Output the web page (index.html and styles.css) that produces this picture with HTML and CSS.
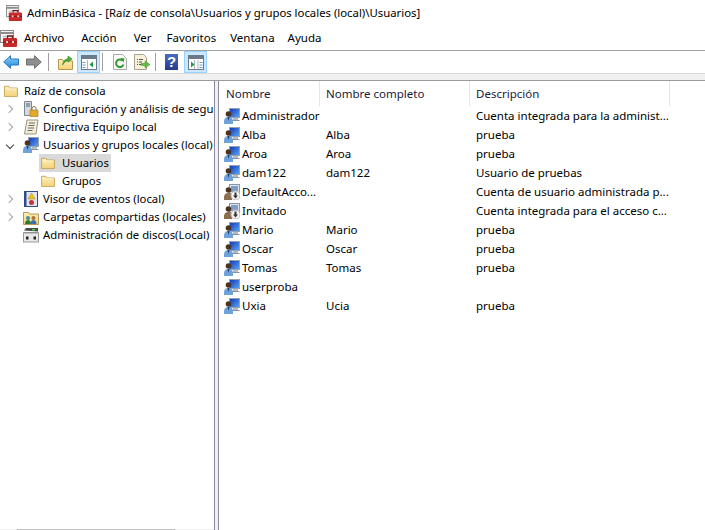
FILE: index.html
```html
<!DOCTYPE html>
<html lang="es">
<head>
  <meta charset="UTF-8">
  <title>AdminBásica</title>
  <link rel="stylesheet" href="styles.css">
</head>
<body>

  <!-- shared icons -->
  <svg class="defs" width="0" height="0">
    <defs>
      <linearGradient id="folderFill" x1="0" y1="0" x2="0" y2="1">
        <stop offset="0" stop-color="#fdeeb4"/>
        <stop offset="1" stop-color="#f4d27c"/>
      </linearGradient>
      <linearGradient id="screenFill" x1="0" y1="0" x2="1" y2="1">
        <stop offset="0" stop-color="#1237b8"/>
        <stop offset="1" stop-color="#5aa6f4"/>
      </linearGradient>
      <linearGradient id="blueArrow" x1="0" y1="0" x2="0" y2="1">
        <stop offset="0" stop-color="#8fd4fb"/>
        <stop offset="1" stop-color="#1b85d8"/>
      </linearGradient>
    </defs>
    <symbol id="folder" viewBox="0 0 16 14">
      <path d="M.5 13.500V1.500h5l1.500 2h8.500v10z" fill="url(#folderFill)" stroke="#c29f4e"/>
      <path d="M1.500 4.500h13" stroke="#fff8dc"/>
    </symbol>
    <symbol id="user" viewBox="0 0 16 16">
      <rect x="5.500" y=".5" width="10" height="9" fill="url(#screenFill)" stroke="#98a2ae"/>
      <path d="M9 10h5v2H9z" fill="#b4bac3"/>
      <path d="M7 12.500h8.500" stroke="#8a929d"/>
      <circle cx="4.500" cy="6" r="2.800" fill="#4a3320"/>
      <path d="M0 16v-3.500C.500 10 2 9 4.500 9S8.500 10 9 12.500V16z" fill="#6ea2da"/>
      <path d="M3.500 9l1 4 1-4z" fill="#1f3d6b"/>
    </symbol>
    <symbol id="userOff" viewBox="0 0 16 16">
      <rect x="5.500" y=".5" width="10" height="9" fill="#dfe5ec" stroke="#8b95a3"/>
      <rect x="7" y="2" width="7" height="6" fill="#7f9fc8"/>
      <circle cx="4.500" cy="6" r="2.800" fill="#4a3320"/>
      <path d="M0 16v-3.500C.500 10 2 9 4.500 9S8.500 10 8 12.500V16z" fill="#8a6d4c"/>
      <circle cx="11.500" cy="11.500" r="4.500" fill="#f4f4f4" stroke="#b8b8b8"/>
      <path d="M10.500 8.500h2v3h1.500l-2.500 3-2.500-3h1.500z" fill="#333"/>
    </symbol>
    <symbol id="toolbox" viewBox="0 0 17 17">
      <rect x=".5" y=".5" width="13" height="12" fill="#f4f4f4" stroke="#8d8d8d"/>
      <path d="M1 3h12" stroke="#8d8d8d" stroke-width="2"/>
      <path d="M3 6.500h3M3 9h2" stroke="#a8a8a8"/>
      <path d="M7.500 8V6h5v2" fill="none" stroke="#6e1414" stroke-width="1.400"/>
      <rect x="3" y="8" width="14" height="9" rx="1" fill="#c62a2a"/>
      <path d="M3 12h14" stroke="#7a1212"/>
      <rect x="6" y="11" width="2" height="2" fill="#e8c8c8"/>
      <rect x="12" y="11" width="2" height="2" fill="#e8c8c8"/>
    </symbol>
    <symbol id="paneBox" viewBox="0 0 16 15">
      <rect x=".5" y=".5" width="15" height="14" fill="#fff" stroke="#6b7a88"/>
      <path d="M1 2.500h14" stroke="#6b7a88" stroke-width="3"/>
      <path d="M6.500 5v9" stroke="#a9b6c2"/>
    </symbol>
  </svg>

  <header class="titlebar">
    <svg class="app-icon"><use href="#toolbox"/></svg>
    <span class="title-text">AdminBásica - [Raíz de consola\Usuarios y grupos locales (local)\Usuarios]</span>
  </header>

  <nav class="menubar">
    <svg class="menu-icon"><use href="#toolbox"/></svg>
    <span class="menu-item menu-wide">Archivo</span>
    <span class="menu-item menu-wide">Acción</span>
    <span class="menu-item">Ver</span>
    <span class="menu-item menu-tight">Favoritos</span>
    <span class="menu-item menu-narrow">Ventana</span>
    <span class="menu-item">Ayuda</span>
  </nav>

  <div class="toolbar">
    <svg class="tool tool-back" viewBox="0 0 16 14" width="16" height="14">
      <path d="M.7 7L7.500.7v3.300h8v6h-8v3.300z" fill="url(#blueArrow)" stroke="#2a76bd"/>
    </svg>
    <svg class="tool tool-forward" viewBox="0 0 16 14" width="16" height="14">
      <path d="M15.300 7L8.500.7v3.300h-8v6h8v3.300z" fill="#8f8f8f" stroke="#6f6f6f"/>
    </svg>
    <span class="tool-sep sep-first"></span>
    <svg class="tool tool-up" viewBox="0 0 15 15" width="15" height="15">
      <path d="M.5 14.500V4.500h4l1 1.500h9v8.500z" fill="url(#folderFill)" stroke="#b5974f"/>
      <path d="M4.500 10C5 6 7.500 4 10 3.500V1l4 3-4 3V5.500C8 6 6 7.500 4.500 10z" fill="#4fae32" stroke="#2f8020" stroke-width=".6"/>
    </svg>
    <span class="tool-toggle toggle-tree">
      <svg viewBox="0 0 16 15" width="16" height="15">
        <use href="#paneBox" width="16" height="15"/>
        <path d="M4.500 7.500h-3M4.500 10h-3M4.500 12.500h-3" stroke="#6a9fc0"/>
        <path d="M12 6.500v6l-3.500-3z" fill="#1e9b3a"/>
      </svg>
    </span>
    <span class="tool-sep sep-second"></span>
    <svg class="tool tool-refresh" viewBox="0 0 14 16" width="14" height="16">
      <path d="M.5.500h9l4 4v11H.500z" fill="#fbfbf6" stroke="#aaa"/>
      <path d="M10.500 10.500A3.800 3.800 0 1 1 9.500 6.500" fill="none" stroke="#2f9a34" stroke-width="2"/>
      <path d="M7.500 4l4 .5-1 4z" fill="#2f9a34"/>
    </svg>
    <svg class="tool tool-export" viewBox="0 0 16 16" width="16" height="16">
      <path d="M.5.500h9l3 3v12H.500z" fill="#f7f1dc" stroke="#a9a28c"/>
      <path d="M3 5.500h1M5 5.500h4M3 8h1M5 8h3M3 10.500h1M5 10.500h2" stroke="#555"/>
      <path d="M7 9.500h4V7l5 3.500-5 3.500v-2.500H7z" fill="#5cc03c" stroke="#3a9426" stroke-width=".5"/>
    </svg>
    <span class="tool-sep sep-third"></span>
    <span class="tool-help">?</span>
    <span class="tool-toggle toggle-actions">
      <svg viewBox="0 0 16 15" width="16" height="15">
        <use href="#paneBox" width="16" height="15"/>
        <path d="M3 6.500v6l3.500-3z" fill="#1e9b3a"/>
        <path d="M10 5v9" stroke="#a9b6c2"/>
        <path d="M11.500 7.500h3M11.500 10h3M11.500 12.500h3" stroke="#6a9fc0"/>
      </svg>
    </span>
  </div>

  <div class="band"></div>

  <main class="panes">
    <aside class="tree">
      <div class="tree-body">
        <div class="tree-row row-root">
          <svg class="ico-folder"><use href="#folder"/></svg>
          <span>Raíz de consola</span>
        </div>
        <div class="tree-row">
          <span class="chev"></span>
          <svg class="node-icon" viewBox="0 0 16 16">
            <path d="M1.500.5h7v14h-7z" fill="#d5dae0" stroke="#7d8794"/>
            <path d="M3 3h4M3 5h4" stroke="#55606e"/>
            <rect x="7" y="9" width="8" height="6.500" fill="#e3a92e" stroke="#a87512" stroke-width=".6"/>
            <path d="M9 9V7.500a2 2 0 0 1 4 0V9" fill="none" stroke="#8a7a50"/>
          </svg>
          <span class="node-label">Configuración y análisis de segu</span>
        </div>
        <div class="tree-row">
          <span class="chev"></span>
          <svg class="node-icon" viewBox="0 0 16 16">
            <path d="M4 1h11l-2 14H1.500z" fill="#f4edd6" stroke="#9b9480"/>
            <path d="M6 4h6M5.500 6.500h6M5 9h6M4.500 11.500h5" stroke="#6b6b6b"/>
          </svg>
          <span class="node-label">Directiva Equipo local</span>
        </div>
        <div class="tree-row">
          <span class="chev chev-open"></span>
          <svg class="node-icon"><use href="#user"/></svg>
          <span class="node-label">Usuarios y grupos locales (local)</span>
        </div>
        <div class="tree-row row-child is-selected">
          <svg class="ico-folder"><use href="#folder"/></svg>
          <span>Usuarios</span>
        </div>
        <div class="tree-row row-child">
          <svg class="ico-folder"><use href="#folder"/></svg>
          <span>Grupos</span>
        </div>
        <div class="tree-row">
          <span class="chev"></span>
          <svg class="node-icon" viewBox="0 0 16 16">
            <rect x="1.500" y=".5" width="13" height="15" fill="#dfe6f2" stroke="#2d4d8a"/>
            <path d="M2.500 1v14" stroke="#2d4d8a" stroke-width="2"/>
            <path d="M8.500 2l3.500 6H5z" fill="#f2c21a" stroke="#a8860f" stroke-width=".5"/>
            <circle cx="8.500" cy="11.500" r="2.500" fill="#c8323a"/>
          </svg>
          <span class="node-label">Visor de eventos (local)</span>
        </div>
        <div class="tree-row">
          <span class="chev"></span>
          <svg class="node-icon" viewBox="0 0 16 16">
            <path d="M.5 15.500V3.500h5l1 1.500h9v10.500z" fill="url(#folderFill)" stroke="#b5974f"/>
            <circle cx="5" cy="9" r="2" fill="#3f8f9c"/>
            <path d="M2 15c0-3 1.500-4 3-4s3 1 3 4z" fill="#2f7a3a"/>
            <circle cx="10.500" cy="9" r="2" fill="#a8743a"/>
            <path d="M7.500 15c0-3 1.500-4 3-4s3 1 3 4z" fill="#3a6fb0"/>
          </svg>
          <span class="node-label">Carpetas compartidas (locales)</span>
        </div>
        <div class="tree-row row-leaf">
          <svg class="node-icon" viewBox="0 0 16 16">
            <path d="M1 3.500L3 1h12v3.500z" fill="#4b4b4b"/>
            <rect x="9" y="2" width="3" height="1.500" fill="#4ed04e"/>
            <rect x=".5" y="5" width="15" height="1" fill="#8a8a8a"/>
            <rect x=".5" y="6" width="15" height="9" fill="#e9e9e9" stroke="#999"/>
            <rect x="3" y="9.500" width="2.500" height="3" fill="#222"/>
            <rect x="10.500" y="9.500" width="2.500" height="3" fill="#222"/>
          </svg>
          <span class="node-label">Administración de discos(Local)</span>
        </div>
      </div>
      <div class="tree-scroll"><span class="tree-thumb"></span></div>
    </aside>

    <div class="splitter"></div>

    <section class="list">
      <div class="list-head">
        <span class="head-cell">Nombre</span>
        <span class="head-cell">Nombre completo</span>
        <span class="head-cell">Descripción</span>
      </div>
      <div class="list-row"><span class="cell-name"><svg class="ico-user"><use href="#user"/></svg>Administrador</span><span></span><span>Cuenta integrada para la administ...</span></div>
      <div class="list-row"><span class="cell-name"><svg class="ico-user"><use href="#user"/></svg>Alba</span><span>Alba</span><span>prueba</span></div>
      <div class="list-row"><span class="cell-name"><svg class="ico-user"><use href="#user"/></svg>Aroa</span><span>Aroa</span><span>prueba</span></div>
      <div class="list-row"><span class="cell-name"><svg class="ico-user"><use href="#user"/></svg>dam122</span><span>dam122</span><span>Usuario de pruebas</span></div>
      <div class="list-row"><span class="cell-name"><svg class="ico-user"><use href="#userOff"/></svg>DefaultAcco...</span><span></span><span>Cuenta de usuario administrada p...</span></div>
      <div class="list-row"><span class="cell-name"><svg class="ico-user"><use href="#userOff"/></svg>Invitado</span><span></span><span>Cuenta integrada para el acceso c...</span></div>
      <div class="list-row"><span class="cell-name"><svg class="ico-user"><use href="#user"/></svg>Mario</span><span>Mario</span><span>prueba</span></div>
      <div class="list-row"><span class="cell-name"><svg class="ico-user"><use href="#user"/></svg>Oscar</span><span>Oscar</span><span>prueba</span></div>
      <div class="list-row"><span class="cell-name"><svg class="ico-user"><use href="#user"/></svg>Tomas</span><span>Tomas</span><span>prueba</span></div>
      <div class="list-row"><span class="cell-name"><svg class="ico-user"><use href="#user"/></svg>userproba</span><span></span><span></span></div>
      <div class="list-row"><span class="cell-name"><svg class="ico-user"><use href="#user"/></svg>Uxia</span><span>Ucia</span><span>prueba</span></div>
    </section>
  </main>

</body>
</html>
```

FILE: styles.css
```css
* {
  box-sizing: border-box;
}

html, body {
  height: 100%;
}

body {
  margin: 0;
  display: flex;
  flex-direction: column;
  overflow: hidden;
  background: #fff;
  color: #000;
  font-family: "Noto Sans", "Open Sans", sans-serif;
  font-size: 11.5px;
  line-height: 16px;
}

.defs {
  display: block;
  flex: none;
}

/* Title + menu */
.titlebar {
  flex: none;
  height: 26px;
  display: flex;
  align-items: center;
  padding-left: 6px;
  gap: 5px;
}

.app-icon {
  width: 16px;
  height: 16px;
  flex: none;
}

.title-text {
  font-size: 11.35px;
  white-space: nowrap;
}

.menubar {
  flex: none;
  height: 25px;
  display: flex;
  align-items: center;
  border-bottom: 1px solid #a0a0a0;
}

.menu-icon {
  width: 17px;
  height: 17px;
  flex: none;
  margin-right: 7px;
}

.menu-item {
  margin-right: 15px;
}

.menu-wide {
  margin-right: 17px;
}

.menu-tight {
  margin-right: 14px;
}

.menu-narrow {
  margin-right: 13px;
}

/* Toolbar */
.toolbar {
  flex: none;
  height: 23px;
  display: flex;
  align-items: center;
  padding-left: 3px;
  border-bottom: 1px solid #d9d9d9;
}

.tool {
  flex: none;
}

.tool-forward {
  margin-left: 7px;
}

.tool-sep {
  flex: none;
  width: 1px;
  height: 18px;
  background: #a0a0a0;
}

.sep-first {
  margin: 0 9px 0 6px;
}

.sep-second {
  margin: 0 10px 0 2px;
}

.sep-third {
  margin: 0 9px 0 5px;
}

.tool-export {
  margin-left: 7px;
}

.tool-toggle {
  flex: none;
  width: 23px;
  height: 22px;
  display: flex;
  align-items: center;
  justify-content: center;
  background: #cce8ff;
  border: 1px solid #99d1ff;
}

.toggle-tree {
  margin-left: 4px;
}

.toggle-actions {
  margin-left: 6px;
}

.tool-help {
  flex: none;
  width: 13px;
  height: 16px;
  background: linear-gradient(#4a6cc4, #26398c);
  color: #fff;
  font-family: "Liberation Sans", sans-serif;
  font-size: 15px;
  font-weight: bold;
  line-height: 16px;
  text-align: center;
}

.band {
  flex: none;
  height: 7px;
  background: #f0f0f0;
  border-bottom: 1px solid #9a9a9a;
}

/* Panes */
.panes {
  flex: 1;
  min-height: 0;
  display: flex;
}

.tree {
  flex: none;
  width: 214px;
  display: flex;
  flex-direction: column;
  overflow: hidden;
  font-size: 11.3px;
}

.tree-body {
  flex: 1;
  padding-top: 1px;
}

.tree-row {
  height: 18px;
  display: flex;
  align-items: center;
  white-space: nowrap;
  overflow: hidden;
}

.row-root {
  padding-left: 4px;
  gap: 6px;
}

.row-child {
  width: 72px;
  margin-left: 39px;
  padding-left: 2px;
  gap: 7px;
}

.is-selected {
  background: #d9d9d9;
}

.row-leaf {
  padding-left: 23px;
}

.ico-folder {
  width: 14px;
  height: 12px;
  flex: none;
}

.chev {
  flex: none;
  width: 6px;
  height: 6px;
  margin: 0 11px 0 6px;
  border-top: 1.500px solid #a6a6a6;
  border-right: 1.500px solid #a6a6a6;
  transform: rotate(45deg);
}

.chev-open {
  border-color: #404040;
  transform: rotate(135deg);
  margin-left: 7px;
  margin-right: 10px;
}

.node-icon {
  flex: none;
  width: 16px;
  height: 16px;
}

.node-label {
  margin-left: 4px;
}

.tree-scroll {
  flex: none;
  height: 1px;
  background: #f0f0f0;
  padding-left: 17px;
}

.tree-thumb {
  display: block;
  width: 158px;
  height: 1px;
  background: #c0c0c0;
}

.splitter {
  flex: none;
  width: 5px;
  background: #f0f0f5;
  border-left: 1px solid #8a8a9a;
  border-right: 1px solid #8a8a9a;
}

/* User list */
.list {
  flex: 1;
  min-width: 0;
}

.list-head {
  height: 25px;
  display: grid;
  grid-template-columns: 101px 150px 200px;
  color: #1a1a3c;
}

.head-cell {
  display: flex;
  align-items: center;
  padding-left: 7px;
  border-right: 1px solid #e5e5e5;
}

.head-cell + .head-cell {
  padding-left: 6px;
}

.list-row {
  height: 19px;
  display: grid;
  grid-template-columns: 101px 150px 200px;
  align-items: center;
  white-space: nowrap;
}

.list-row > span + span {
  padding-left: 6px;
}

.cell-name {
  display: flex;
  align-items: center;
  padding-left: 5px;
  gap: 2px;
}

.ico-user {
  flex: none;
  width: 16px;
  height: 16px;
}
```
